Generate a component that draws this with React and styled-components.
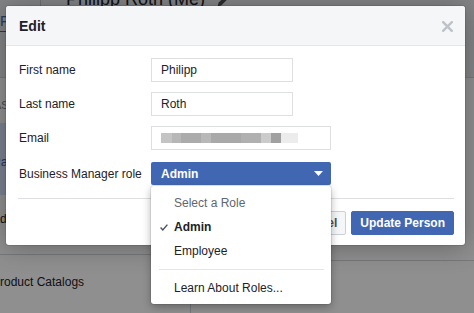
import React from "react";
import styled, { createGlobalStyle } from "styled-components";

const Global = createGlobalStyle`
  html, body { margin: 0; padding: 0; }
  body { font-family: "Liberation Sans", Arial, sans-serif; }
  * { box-sizing: border-box; }
`;

const Page = styled.div`
  position: relative;
  width: 474px;
  height: 313px;
  overflow: hidden;
  background: #ffffff;
  font-family: "Liberation Sans", Arial, sans-serif;
`;

/* ---------- background page ---------- */
const Backdrop = styled.div`
  display: flex;
  flex-direction: column;
  height: 100%;
`;

const Header = styled.div`
  background: #e9ebee;
  border-bottom: 1px solid #d3d6db;
  margin-top: -12px;
  height: 91px;
  display: flex;
  flex-direction: column;
`;

const TitleRow = styled.div`
  display: flex;
  align-items: flex-start;
  height: 23px;
`;

const NavCell = styled.div`
  width: 41px;
  height: 100%;
  border-right: 1px solid #c4c7cc;
`;

const PageTitle = styled.div`
  margin-left: 25px;
  font-size: 18px;
  line-height: 22px;
  color: #1d2129;
`;

const EditIcon = styled.svg`
  margin-left: 12px;
  margin-top: 6px;
  width: 13px;
  height: 13px;
`;

const Tabs = styled.div`
  display: flex;
`;

const Tab = styled.div`
  font-size: 14px;
  line-height: 19px;
  height: 21px;
  color: #4267b2;
  border-bottom: 1px solid #4267b2;
  padding-top: 1px;
`;

const Columns = styled.div`
  flex: 1;
  display: flex;
`;

const LeftCol = styled.div`
  width: 199px;
  margin-left: -8px;
  border-right: 1px solid #d3d6db;
  display: flex;
  flex-direction: column;
`;

const NavRow = styled.div`
  height: ${(p) => p.$h}px;
  padding-top: ${(p) => p.$pt}px;
  font-size: ${(p) => p.$fs || 12}px;
  line-height: 16px;
  color: ${(p) => p.$color || "#1d2129"};
  background: ${(p) => (p.$selected ? "#dce8ff" : "transparent")};
  border-bottom: ${(p) => (p.$line ? "1px solid #d3d6db" : "none")};
`;

const RightCol = styled.div`
  flex: 1;
  display: flex;
  flex-direction: column;
`;

const RightTop = styled.div`
  height: 183px;
  border-bottom: 1px solid #d3d6db;
`;

const Overlay = styled.div`
  position: absolute;
  inset: 0;
  background: rgba(0, 0, 0, 0.44);
`;

/* ---------- modal ---------- */
const Modal = styled.div`
  position: absolute;
  left: 6px;
  top: 6px;
  width: 459px;
  background: #ffffff;
  border-radius: 3px;
  box-shadow: 0 2px 26px rgba(0, 0, 0, 0.3), 0 0 0 1px rgba(0, 0, 0, 0.1);
  font-size: 12px;
  color: #1d2129;
`;

const ModalHeader = styled.div`
  height: 40px;
  background: #f5f6f7;
  border-bottom: 1px solid #e5e5e5;
  border-radius: 3px 3px 0 0;
  display: flex;
  align-items: center;
  justify-content: space-between;
  padding: 0 12px 0 13px;
`;

const ModalTitle = styled.div`
  font-size: 14px;
  font-weight: bold;
  line-height: 18px;
  color: #1d2129;
`;

const CloseBtn = styled.svg`
  width: 11px;
  height: 11px;
  margin-top: 1px;
`;

const Form = styled.div`
  display: grid;
  grid-template-columns: 132px 1fr;
  row-gap: 10px;
  align-items: center;
  padding: 12px 13px 0;
`;

const Label = styled.div`
  font-size: 12px;
  line-height: 16px;
  color: #1d2129;
`;

const Input = styled.div`
  width: ${(p) => p.$w}px;
  height: 24px;
  border: 1px solid #dddfe2;
  padding-left: 9px;
  display: flex;
  align-items: center;
  font-size: 12px;
  color: #1d2129;
`;

const Blur = styled.div`
  width: 137px;
  height: 10px;
  background: linear-gradient(
    to right,
    #c4c4c4 0 11px,
    #b7b7b7 11px 20px,
    #ababab 20px 40px,
    #b8b8b8 40px 50px,
    #a9a9a9 50px 80px,
    #b0b0b0 80px 100px,
    #cbcbcb 100px 110px,
    #a0a0a0 110px 120px,
    #ececec 120px 137px
  );
`;

const SelectWrap = styled.div`
  position: relative;
  width: 180px;
  margin-top: 2px;
`;

const Select = styled.div`
  height: 23px;
  background: #4267b2;
  border-radius: 2px;
  color: #ffffff;
  font-weight: bold;
  font-size: 12px;
  display: flex;
  align-items: center;
  justify-content: space-between;
  padding: 0 8px 0 10px;
`;

const Caret = styled.svg`
  width: 9px;
  height: 5px;
`;

const Menu = styled.div`
  position: absolute;
  left: 0;
  top: 24px;
  width: 180px;
  background: #ffffff;
  border-radius: 3px;
  box-shadow: 0 3px 8px rgba(0, 0, 0, 0.3), 0 0 0 1px rgba(0, 0, 0, 0.08);
  padding: 5px 0 4px;
  z-index: 2;
`;

const MenuItem = styled.div`
  position: relative;
  height: 24px;
  line-height: 24px;
  padding-left: 23px;
  font-size: 12px;
  font-weight: ${(p) => (p.$bold ? "bold" : "normal")};
  color: ${(p) => (p.$muted ? "#606770" : "#1d2129")};
`;

const Check = styled.svg`
  position: absolute;
  left: 9px;
  top: 9px;
  width: 8px;
  height: 7px;
`;

const MenuSep = styled.div`
  height: 1px;
  background: #e5e5e5;
  margin: 6px 7px 6px 8px;
`;

const Divider = styled.div`
  height: 1px;
  background: #dddfe2;
  margin: 13px 11px 0 12px;
`;

const Footer = styled.div`
  display: flex;
  justify-content: flex-end;
  gap: 5px;
  padding: 12px 11px 10px;
`;

const Button = styled.div`
  height: 24px;
  padding: 0 8px;
  border-radius: 2px;
  border: 1px solid ${(p) => (p.$primary ? "#4267b2" : "#ccd0d5")};
  background: ${(p) => (p.$primary ? "#4267b2" : "#f5f6f7")};
  color: ${(p) => (p.$primary ? "#ffffff" : "#4b4f56")};
  font-weight: bold;
  font-size: 12px;
  line-height: 22px;
`;

export default function App() {
  return (
    <>
      <Global />
      <Page>
        <Backdrop>
          <Header>
            <TitleRow>
              <NavCell />
              <PageTitle>Philipp Roth (Me)</PageTitle>
              <EditIcon viewBox="0 0 13 13">
                <path d="M9.5 0.8 L12.2 3.5 L4.2 11.5 L0.8 12.2 L1.5 8.8 Z" fill="#4b4f56" />
              </EditIcon>
            </TitleRow>
            <Tabs>
              <Tab>Facebook</Tab>
            </Tabs>
          </Header>
          <Columns>
            <LeftCol>
              <NavRow $h={45} $pt={18} $fs={14} $color="#90949c">Assets</NavRow>
              <NavRow $h={72} $pt={31} $fs={13} $color="#4267b2" $selected>Pages</NavRow>
              <NavRow $h={60} $pt={16} $line>Ad Accounts</NavRow>
              <NavRow $h={58} $pt={19}>Product Catalogs</NavRow>
            </LeftCol>
            <RightCol>
              <RightTop />
            </RightCol>
          </Columns>
        </Backdrop>
        <Overlay />
        <Modal>
          <ModalHeader>
            <ModalTitle>Edit</ModalTitle>
            <CloseBtn viewBox="0 0 11 11">
              <path d="M1.2 1.2 L9.8 9.8 M9.8 1.2 L1.2 9.8" stroke="#bec2c9" strokeWidth="2.4" strokeLinecap="square" />
            </CloseBtn>
          </ModalHeader>
          <Form>
            <Label>First name</Label>
            <Input $w={142}>Philipp</Input>
            <Label>Last name</Label>
            <Input $w={142}>Roth</Input>
            <Label>Email</Label>
            <Input $w={180}>
              <Blur />
            </Input>
            <Label style={{ marginTop: 2 }}>Business Manager role</Label>
            <SelectWrap>
              <Select>
                <span>Admin</span>
                <Caret viewBox="0 0 9 5">
                  <path d="M0 0 L9 0 L4.5 5 Z" fill="#ffffff" />
                </Caret>
              </Select>
              <Menu>
                <MenuItem $muted>Select a Role</MenuItem>
                <MenuItem $bold>
                  <Check viewBox="0 0 8 7">
                    <path d="M0.6 3.6 L2.8 5.9 L7.4 0.6" stroke="#4b4f56" strokeWidth="1.4" fill="none" />
                  </Check>
                  Admin
                </MenuItem>
                <MenuItem>Employee</MenuItem>
                <MenuSep />
                <MenuItem>Learn About Roles...</MenuItem>
              </Menu>
            </SelectWrap>
          </Form>
          <Divider />
          <Footer>
            <Button>Cancel</Button>
            <Button $primary>Update Person</Button>
          </Footer>
        </Modal>
      </Page>
    </>
  );
}
